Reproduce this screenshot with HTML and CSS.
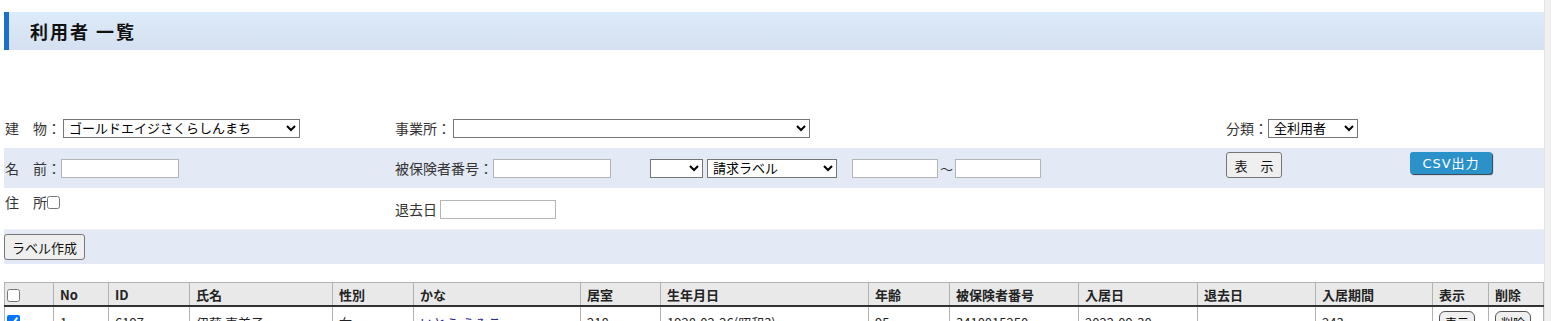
FILE: index.html
```html
<!DOCTYPE html>
<html lang="ja">
<head>
    <meta charset="UTF-8">
    <meta name="viewport" content="width=device-width, initial-scale=1.0">
    <title>利用者 一覧</title>
    <link rel="stylesheet" href="styles.css">
</head>
<body>
    <div class="page">
        <h2 class="head">利用者 一覧</h2>

        <form class="search">
            <div class="row">
                <div class="cell"><label>建　物：</label><select class="sel-building"><option>ゴールドエイジさくらしんまち</option></select></div>
                <div class="cell"><label>事業所：</label><select class="sel-office"><option></option></select></div>
                <div class="cell wide"><label>分類：</label><select class="sel-kind"><option>全利用者</option></select></div>
            </div>

            <div class="row shade">
                <div class="cell"><label>名　前：</label><input type="text" class="txt"></div>
                <div class="cell">
                    <label>被保険者番号：</label><input type="text" class="txt">
                    <select class="sel-blank"><option></option></select>
                    <select class="sel-label"><option>請求ラベル</option></select>
                    <input type="text" class="txt-s range-from"><span class="tilde">～</span><input type="text" class="txt-s">
                </div>
                <div class="cell"><button type="button" class="btn">表　示</button></div>
                <div class="cell"><button type="button" class="btn-csv">CSV出力</button></div>
            </div>

            <div class="row">
                <div class="cell top"><label>住　所</label><input type="checkbox" class="chk"></div>
                <div class="cell low"><label>退去日</label><input type="text" class="txt-d"></div>
            </div>

            <div class="row shade short">
                <button type="button" class="btn">ラベル作成</button>
            </div>
        </form>

        <table class="list">
            <colgroup>
                <col style="width:49px"><col style="width:55px"><col style="width:81px"><col style="width:143px">
                <col style="width:81px"><col style="width:167px"><col style="width:80px"><col style="width:208px">
                <col style="width:81px"><col style="width:129px"><col style="width:119px"><col style="width:118px">
                <col style="width:117px"><col style="width:56px"><col style="width:55px">
            </colgroup>
            <thead>
                <tr>
                    <th><input type="checkbox"></th>
                    <th>No</th>
                    <th>ID</th>
                    <th>氏名</th>
                    <th>性別</th>
                    <th>かな</th>
                    <th>居室</th>
                    <th>生年月日</th>
                    <th>年齢</th>
                    <th>被保険者番号</th>
                    <th>入居日</th>
                    <th>退去日</th>
                    <th>入居期間</th>
                    <th>表示</th>
                    <th>削除</th>
                </tr>
            </thead>
            <tbody>
                <tr>
                    <td><input type="checkbox" checked></td>
                    <td>1</td>
                    <td>6197</td>
                    <td>伊藤 恵美子</td>
                    <td>女</td>
                    <td><a href="#" class="kana">いとう えみこ</a></td>
                    <td>218</td>
                    <td>1928-02-26(昭和3)</td>
                    <td>95</td>
                    <td>3410015250</td>
                    <td>2022-09-30</td>
                    <td></td>
                    <td>243</td>
                    <td><button type="button" class="btn-sm">表示</button></td>
                    <td><button type="button" class="btn-sm">削除</button></td>
                </tr>
            </tbody>
        </table>
    </div>
</body>
</html>
```

FILE: styles.css
```css
html {
    background: #f0f0f0;
}
body {
    margin: 0;
    font-family: "Noto Sans CJK JP", "Noto Sans", sans-serif;
    font-size: 14px;
    color: #333;
}
.page {
    width: 1540px;
    padding: 12px 0 40px 4px;
    background: #fff;
    border-right: 1px solid #e4e4e4;
}

/* 見出し */
.head {
    margin: 0;
    height: 38px;
    line-height: 38px;
    padding-left: 21px;
    border-left: 5px solid #1c6fcf;
    background: linear-gradient(#dcebf9, #d5e0f1);
    font-size: 18px;
    letter-spacing: 2px;
    color: #111;
}

/* 検索フォーム */
.search {
    margin-top: 58px;
}
.row {
    display: grid;
    grid-template-columns: 391px 831px 184px 1fr;
    height: 40px;
    align-items: center;
}
.row .wide {
    grid-column: 3 / 5;
}
.shade {
    background: #e3eaf6;
}
.short {
    display: flex;
    height: 34px;
    margin-top: 1px;
    border-top: 1px solid #eef0f4;
}
.cell {
    display: flex;
    align-items: center;
    white-space: nowrap;
}
.cell:first-child {
    padding-left: 1px;
}
.cell.top {
    align-self: start;
    padding-top: 4px;
}
.cell.low {
    padding-top: 2px;
}
label {
    color: #333;
}
select {
    height: 19px;
    box-sizing: border-box;
    border: 1px solid #767676;
    border-radius: 0;
    background: #fff;
    font-family: "Liberation Sans", "Noto Sans CJK JP", sans-serif;
    font-size: 13px;
    color: #000;
    padding: 0 0 0 1px;
}
.sel-building { width: 237px; margin-left: 2px; }
.sel-office { width: 357px; margin-left: 2px; }
.sel-kind { width: 90px; }
.sel-blank { width: 53px; margin-left: 39px; }
.sel-label { width: 130px; margin-left: 4px; }

input[type=text] {
    height: 19px;
    box-sizing: border-box;
    border: 1px solid #b4b4b4;
    padding: 0 3px;
}
.txt { width: 118px; }
.txt-s { width: 86px; }
.range-from { margin-left: 15px; }
.tilde {
    margin: 0 2px;
    font-size: 13px;
}
.txt-d {
    width: 116px;
    margin-left: 3px;
}
.chk {
    margin: 0;
    width: 13px;
    height: 13px;
}

.btn {
    height: 26px;
    padding: 0 7px;
    border: 1px solid #767676;
    border-radius: 3px;
    background: #efefef;
    font-family: inherit;
    font-size: 13px;
    color: #111;
}
.cell .btn {
    width: 56px;
    margin-top: -6px;
}
.btn-csv {
    height: 22px;
    width: 82px;
    margin-top: -11px;
    border: 0;
    border-radius: 3px;
    background: #2b91c9;
    box-shadow: 1px 1px 1px #2a3c4c;
    color: #fff;
    font-family: "DejaVu Sans", "Noto Sans CJK JP", sans-serif;
    font-size: 13px;
    letter-spacing: 1px;
}

/* 一覧 */
.list {
    margin-top: 18px;
    border-collapse: collapse;
    table-layout: fixed;
    width: 1539px;
    font-size: 13px;
}
.list th,
.list td {
    border: 1px solid #b2b2b2;
    padding: 0 6px;
    text-align: left;
    white-space: nowrap;
}
.list th {
    height: 22px;
    background: #e9e9e9;
    border-bottom: 2px solid #333;
    color: #222;
}
.list th:first-child,
.list td:first-child {
    padding: 0 2px;
}
.list th input {
    margin: 0;
    width: 13px;
    height: 13px;
    vertical-align: middle;
}
.list td {
    height: 30px;
    color: #222;
}
.list td input {
    margin: 0;
}
.kana {
    color: #2a2a8c;
    text-decoration: none;
}
.btn-sm {
    height: 22px;
    padding: 0 5px;
    border: 1px solid #555;
    border-radius: 6px;
    background: #efefef;
    font-family: inherit;
    font-size: 12px;
}
```
